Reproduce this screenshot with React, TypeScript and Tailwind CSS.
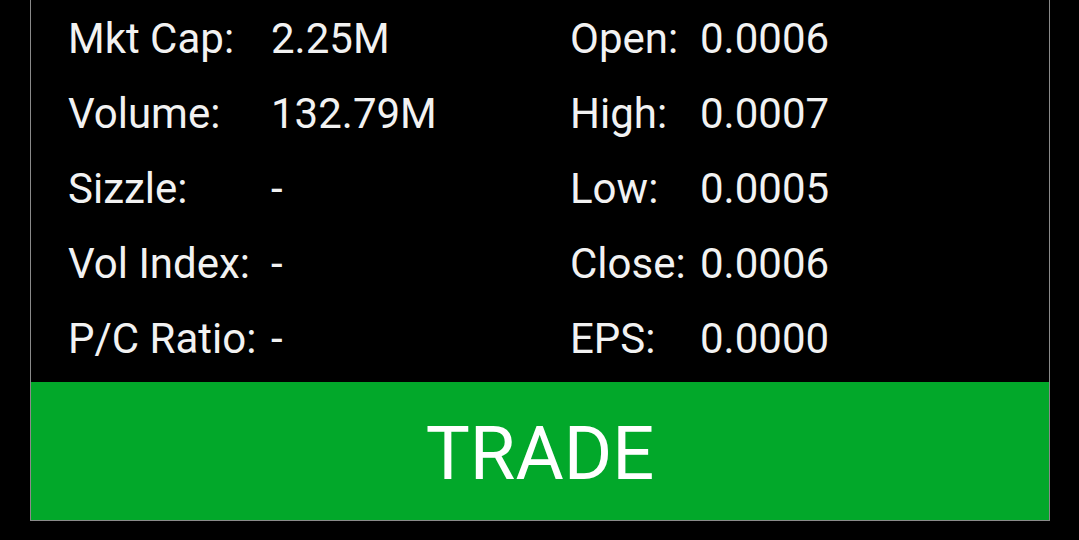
import React from 'react';

const rows: [string, string, string, string][] = [
  ['Mkt Cap:', '2.25M', 'Open:', '0.0006'],
  ['Volume:', '132.79M', 'High:', '0.0007'],
  ['Sizzle:', '-', 'Low:', '0.0005'],
  ['Vol Index:', '-', 'Close:', '0.0006'],
  ['P/C Ratio:', '-', 'EPS:', '0.0000'],
];

const App: React.FC = () => {
  return (
    <div className="w-[1079px] h-[540px] bg-black overflow-hidden" style={{ fontFamily: 'Roboto, sans-serif' }}>
      <div className="ml-[30px] w-[1020px] h-[521px] flex flex-col border-x border-[#8a8a8a]">
        <div className="flex-1 pt-[1px]">
          {rows.map(([l1, v1, l2, v2]) => (
            <div key={l1} className="h-[75px] flex items-center text-[42px] text-[#f2f2f2] leading-none">
              <span className="w-[203px] pl-[37px] box-content whitespace-nowrap">{l1}</span>
              <span className="w-[299px]">{v1}</span>
              <span className="w-[130px] whitespace-nowrap">{l2}</span>
              <span>{v2}</span>
            </div>
          ))}
        </div>
        <button
          type="button"
          className="h-[139px] w-full bg-[#02a82a] border-b border-[#8a8a8a] text-white text-[74px] leading-none flex items-center justify-center pt-[6px]"
        >
          TRADE
        </button>
      </div>
    </div>
  );
};

export default App;
